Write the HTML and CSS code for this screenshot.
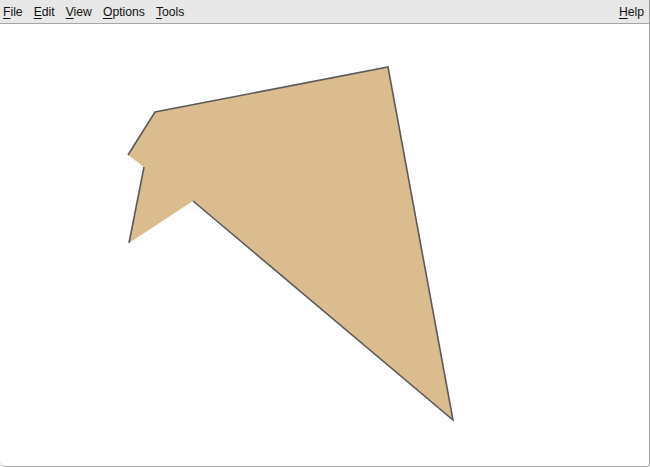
FILE: index.html
```html
<!DOCTYPE html>
<html>
<head>
<meta charset="utf-8">
<link rel="stylesheet" href="styles.css">
</head>
<body>
<div class="window">
  <div class="menubar">
    <span class="item"><u>F</u>ile</span>
    <span class="item"><u>E</u>dit</span>
    <span class="item"><u>V</u>iew</span>
    <span class="item"><u>O</u>ptions</span>
    <span class="item"><u>T</u>ools</span>
    <span class="spacer"></span>
    <span class="item help"><u>H</u>elp</span>
  </div>
  <div class="canvas">
    <svg class="drawing" width="649" height="442" viewBox="0 24 649 442">
      <polygon class="shape" points="128,155 155,112 388,67 453,420 193,201 129,243 144,167"/>
      <polyline class="edge" points="128,155 155,112 388,67 453,420 193,201"/>
      <polyline class="edge" points="144,167 129,243"/>
    </svg>
  </div>
</div>
</body>
</html>
```
FILE: styles.css
```css
html, body {
  margin: 0;
  padding: 0;
  background: #ffffff;
}
.window {
  width: 649px;
  height: 466px;
  display: flex;
  flex-direction: column;
  border-right: 1px solid #9a9a9a;
  border-bottom: 1px solid #a8a8a8;
  border-bottom-left-radius: 5px;
  border-bottom-right-radius: 3px;
  overflow: hidden;
  font-family: "Liberation Sans", Arial, sans-serif;
}
.menubar {
  height: 23px;
  background: #e8e8e8;
  border-bottom: 1px solid #a6a6a6;
  display: flex;
  align-items: center;
  padding: 1px 5px 0 3px;
  font-size: 12.2px;
  color: #111;
  box-sizing: border-box;
  height: 24px;
}
.item {
  margin-right: 11px;
  line-height: 16px;
}
.item u {
  text-decoration-thickness: 1px;
  text-underline-offset: 2px;
}
.help {
  margin-right: 0;
}
.spacer {
  flex: 1;
}
.canvas {
  flex: 1;
  position: relative;
}
.drawing {
  display: block;
}
.shape {
  fill: #dbbc8e;
  stroke: none;
}
.edge {
  fill: none;
  stroke: #5a5a5a;
  stroke-width: 1.6;
  stroke-linejoin: miter;
}
```
